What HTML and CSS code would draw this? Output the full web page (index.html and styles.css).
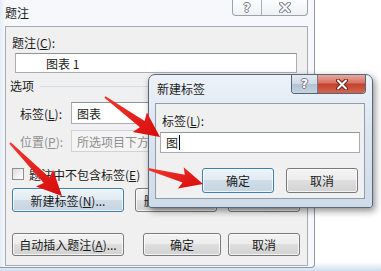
FILE: index.html
```html
<!DOCTYPE html>
<html lang="zh-CN">
<head>
    <meta charset="UTF-8">
    <meta name="viewport" content="width=device-width, initial-scale=1.0">
    <title>题注</title>
    <link rel="stylesheet" href="styles.css">
</head>
<body>
<div class="screen">

    <!-- main caption dialog (inactive) -->
    <div class="main-win">
        <div class="titlebar">
            <span class="title">题注</span>
            <div class="cap-btns inactive">
                <span class="cap-help">?</span>
                <span class="cap-close">
                    <svg width="14" height="11" viewBox="0 0 14 11">
                        <path d="M3 1.5 L11 9.5 M11 1.5 L3 9.5" stroke="#7d8692" stroke-width="4" stroke-linecap="round"/>
                        <path d="M3 1.5 L11 9.5 M11 1.5 L3 9.5" stroke="#f7f7f7" stroke-width="2" stroke-linecap="round"/>
                    </svg>
                </span>
            </div>
        </div>
        <div class="client main-client">
            <div class="caption-lbl">题注(<u>C</u>):</div>
            <div class="field caption-field">图表 1</div>
            <div class="group-head"><span>选项</span><i class="group-line"></i></div>
            <div class="row">
                <span class="row-lbl">标签(<u>L</u>):</span>
                <div class="field combo">图表<i class="drop"></i></div>
            </div>
            <div class="row">
                <span class="row-lbl disabled">位置(<u>P</u>):</span>
                <div class="field combo disabled">所选项目下方<i class="drop"></i></div>
            </div>
            <div class="check-row"><span class="checkbox"></span>题注中不包含标签(<u>E</u>)</div>
            <div class="btn-row mid-row">
                <button class="btn default w112">新建标签(<u>N</u>)...</button>
                <button class="btn w82 gap11">删除标签(<u>D</u>)</button>
                <button class="btn w72 gap11">编号(<u>U</u>)...</button>
            </div>
            <div class="btn-row bottom-row">
                <button class="btn w112">自动插入题注(<u>A</u>)...</button>
                <button class="btn w78 gap19">确定</button>
                <button class="btn w72 gap7">取消</button>
            </div>
        </div>
    </div>

    <!-- new label dialog (active, on top) -->
    <div class="new-win">
        <div class="titlebar new-titlebar">
            <span class="title">新建标签</span>
            <div class="cap-btns active">
                <span class="cap-help">?</span>
                <span class="cap-close">
                    <svg width="14" height="11" viewBox="0 0 14 11">
                        <path d="M3 1.5 L11 9.5 M11 1.5 L3 9.5" stroke="#6e2119" stroke-width="4" stroke-linecap="round"/>
                        <path d="M3 1.5 L11 9.5 M11 1.5 L3 9.5" stroke="#ffffff" stroke-width="2" stroke-linecap="round"/>
                    </svg>
                </span>
            </div>
        </div>
        <div class="client new-client">
            <div class="new-lbl">标签(<u>L</u>):</div>
            <div class="field new-field">图<span class="caret"></span></div>
            <div class="btn-row new-btns">
                <button class="btn default w72">确定</button>
                <button class="btn w72">取消</button>
            </div>
        </div>
    </div>

    <!-- red pointer arrows over everything -->
    <svg class="arrows" width="381" height="271" viewBox="0 0 381 271">
        <defs>
            <linearGradient id="red" x1="0" y1="0" x2="1" y2="1">
                <stop offset="0" stop-color="#f2392f"/>
                <stop offset="1" stop-color="#d60b0b"/>
            </linearGradient>
        </defs>
        <polygon points="104.4,97.8 139.9,127.3 132.7,132 160,137 146.9,112.6 144.6,120.9 105.6,96.2" fill="url(#red)"/>
        <polygon points="9.3,143.7 43.7,183.1 35.9,186.6 62,196 53.1,169.8 49.5,177.5 10.7,142.3" fill="url(#red)"/>
        <polygon points="147.7,170 182.6,182.6 177.9,188.5 203,184 183.7,167.3 184.8,174.8 148.3,168" fill="url(#red)"/>
    </svg>
</div>
</body>
</html>
```

FILE: styles.css
```css
* {
    box-sizing: border-box;
}
body {
    margin: 0;
    font-family: "Noto Sans CJK SC", "Noto Sans", sans-serif;
    font-size: 12px;
    color: #1b1b1b;
}
u {
    text-decoration: underline;
    text-underline-offset: 1px;
}
.screen {
    position: relative;
    width: 381px;
    height: 271px;
    overflow: hidden;
    background: linear-gradient(to bottom, #ffffff 0, #ffffff 262px, #cddff0 271px);
}

/* window frames */
.main-win {
    width: 316px;
    height: 268px;
    margin-left: -1px;
    border: 1px solid #8f9aa5;
    border-top: none;
    border-radius: 0 0 4px 0;
    background: linear-gradient(to right, #e4ecf5 0, #f6f8fb 5px, #f6f8fb 100%);
}
.titlebar {
    display: flex;
    align-items: center;
    height: 26px;
    padding-left: 5px;
}
.title {
    line-height: 16px;
}
.cap-btns {
    display: flex;
    align-self: flex-start;
    margin-left: auto;
    border: 1px solid #9aa3ad;
    border-top: none;
    border-radius: 0 0 4px 4px;
    overflow: hidden;
}
.cap-btns span {
    display: flex;
    align-items: center;
    justify-content: center;
}
.cap-help {
    font-family: "DejaVu Sans", sans-serif;
    font-weight: bold;
    font-size: 12px;
    line-height: 1;
    color: #ffffff;
    text-shadow: 1px 0 #727b87, -1px 0 #727b87, 0 1px #727b87, 0 -1px #727b87;
    border-right: 1px solid #a6aeb8;
}
.inactive {
    height: 16px;
    margin-right: 6px;
    background: linear-gradient(#fdfdfd, #eef1f4);
}
.inactive .cap-help { width: 29px; }
.inactive .cap-close { width: 45px; }

.active {
    height: 19px;
    margin-right: 6px;
    border-color: #53657a;
}
.active .cap-help {
    width: 26px;
    background: linear-gradient(#e3eaf2 0%, #cfd9e4 50%, #b3c2d3 51%, #c5d2df 100%);
    border-right-color: #6c7c8e;
}
.active .cap-close {
    width: 47px;
    background: linear-gradient(#e8aa9e 0%, #d7705f 45%, #c2412f 50%, #d2664f 100%);
}

.client {
    border: 1px solid #a5acb5;
    background: #f0f0f0;
}
.main-client {
    width: 303px;
    height: 240px;
    margin-left: 5px;
}

/* main dialog content */
.caption-lbl {
    margin-top: 8px;
    padding-left: 6px;
    line-height: 16px;
}
.field {
    display: flex;
    align-items: center;
    background: #ffffff;
    border: 1px solid #abadb3;
    border-top-color: #8e9399;
}
.caption-field {
    width: 282px;
    height: 20px;
    margin: 2px 0 0 9px;
    padding-left: 30px;
}
.group-head {
    display: flex;
    align-items: center;
    margin-top: 5px;
    padding-left: 4px;
    line-height: 16px;
}
.group-line {
    flex: 1;
    height: 1px;
    margin: 0 6px;
    background: #d8dde2;
}
.row {
    display: flex;
    align-items: center;
    height: 22px;
    margin-top: 8px;
}
.row + .row {
    margin-top: 6px;
}
.row-lbl {
    width: 65px;
    padding-left: 14px;
}
.combo {
    position: relative;
    width: 226px;
    height: 22px;
    padding-left: 5px;
}
.drop {
    position: absolute;
    right: 6px;
    top: 8px;
    border: 4px solid transparent;
    border-top-color: #333;
}
.disabled {
    color: #8f8f8f;
}
.combo.disabled {
    background: #f4f4f4;
    border-color: #cfd2d6;
}
.check-row {
    display: flex;
    align-items: center;
    height: 14px;
    margin-top: 15px;
    padding-left: 6px;
}
.checkbox {
    width: 12px;
    height: 12px;
    margin-right: 5px;
    border: 1px solid #8f8f8f;
    background: linear-gradient(135deg, #dcdcdc, #ffffff);
}

/* buttons */
.btn-row {
    display: flex;
}
.mid-row {
    height: 24px;
    margin: 7px 0 0 6px;
}
.bottom-row {
    height: 23px;
    margin: 21px 0 0 6px;
}
.btn {
    height: 100%;
    padding: 0;
    font: inherit;
    color: #1b1b1b;
    border: 1px solid #7a7a7a;
    border-radius: 3px;
    background: linear-gradient(#f4f4f4 0%, #ececec 48%, #dfdfdf 50%, #d2d2d2 100%);
    box-shadow: inset 0 0 0 1px rgba(255, 255, 255, 0.75);
}
.btn.default {
    border-color: #3d80b3;
    background: linear-gradient(#eef4f9 0%, #e1ebf3 48%, #d0dde8 50%, #c5d4e1 100%);
}
.w112 { width: 112px; }
.w82 { width: 82px; }
.w78 { width: 78px; }
.w72 { width: 72px; }
.gap7 { margin-left: 7px; }
.gap11 { margin-left: 11px; }
.gap19 { margin-left: 19px; }

/* new label dialog */
.new-win {
    position: absolute;
    left: 148px;
    top: 74px;
    width: 225px;
    height: 134px;
    border: 1px solid #56687c;
    border-radius: 7px 7px 3px 3px;
    background: linear-gradient(#edf2f8 0%, #dce6f1 40%, #cfdbe8 100%);
    box-shadow: 2px 3px 7px rgba(0, 0, 0, 0.45);
}
.new-titlebar {
    height: 28px;
    padding-left: 8px;
}
.new-client {
    height: 96px;
    margin: 0 7px 0 6px;
    border-color: #8e9cab;
}
.new-lbl {
    margin-top: 9px;
    padding-left: 6px;
    line-height: 16px;
}
.new-field {
    height: 21px;
    margin: 3px 4px 0 4px;
    padding-left: 5px;
}
.caret {
    width: 1px;
    height: 15px;
    margin-left: 1px;
    background: #000000;
}
.new-btns {
    justify-content: flex-end;
    gap: 12px;
    height: 25px;
    margin-top: 15px;
    padding-right: 6px;
}

.arrows {
    position: absolute;
    left: 0;
    top: 0;
    pointer-events: none;
}
```
